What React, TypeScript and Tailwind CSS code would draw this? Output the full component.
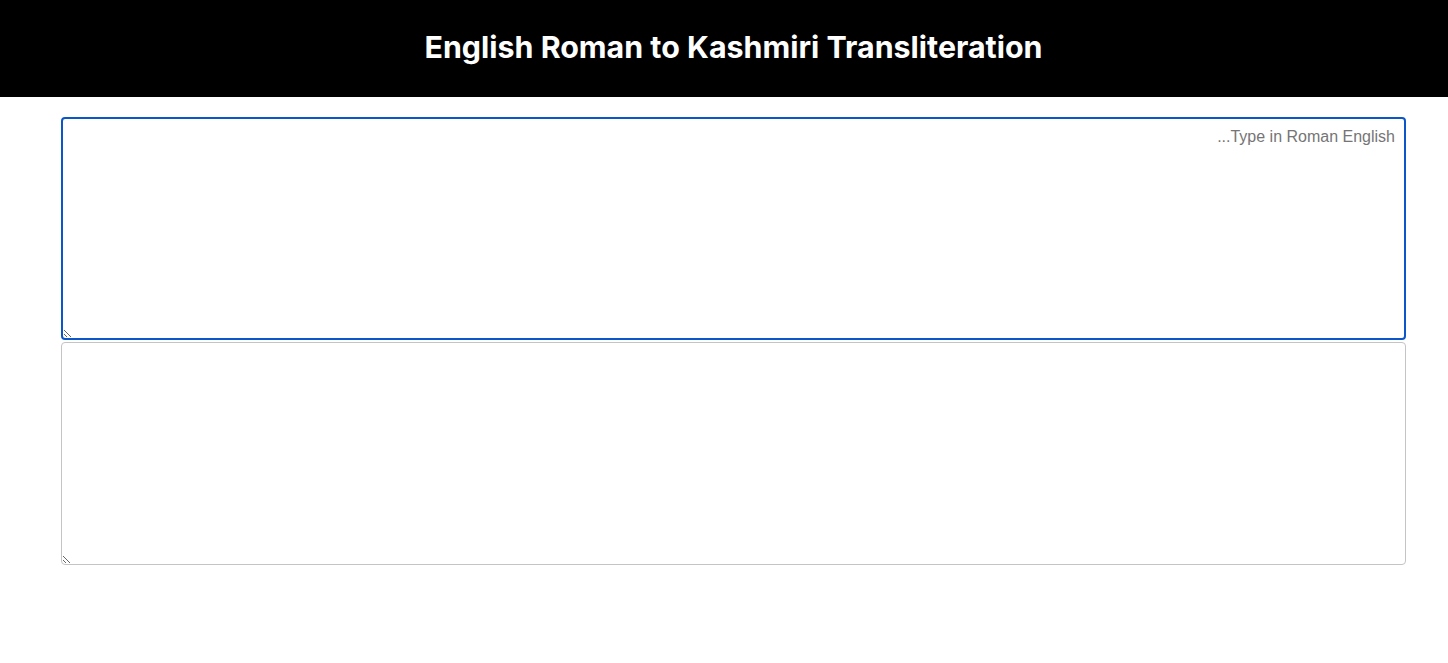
import React from "react";

export default function App() {
  return (
    <div className="min-h-[663px] bg-white" style={{ fontFamily: "'Liberation Sans', Arial, sans-serif" }}>
      <header className="h-[97px] bg-black flex items-center justify-center pb-[2px] pl-[19px]">
        <h1 className="text-white text-[30.4px] font-bold font-['Inter',sans-serif] tracking-[0px]">
          English Roman to Kashmiri Transliteration
        </h1>
      </header>
      <div className="pt-[20px] pl-[61px] pr-[42px] flex flex-col gap-[2px]">
        <textarea
          dir="rtl"
          placeholder="Type in Roman English..."
          className="block w-full h-[223px] border-2 border-[#0b57c9] rounded-[4px] px-[9px] pt-[6px] pb-2 text-[16px] text-black placeholder:text-[#757575] outline-none font-['Liberation_Sans',Arial,sans-serif] resize"
        />
        <textarea
          dir="rtl"
          className="block w-full h-[223px] border border-[#c4c4c4] rounded-[4px] px-[9px] pt-[6px] pb-2 text-[16px] text-black outline-none font-['Liberation_Sans',Arial,sans-serif] resize"
        />
      </div>
    </div>
  );
}
